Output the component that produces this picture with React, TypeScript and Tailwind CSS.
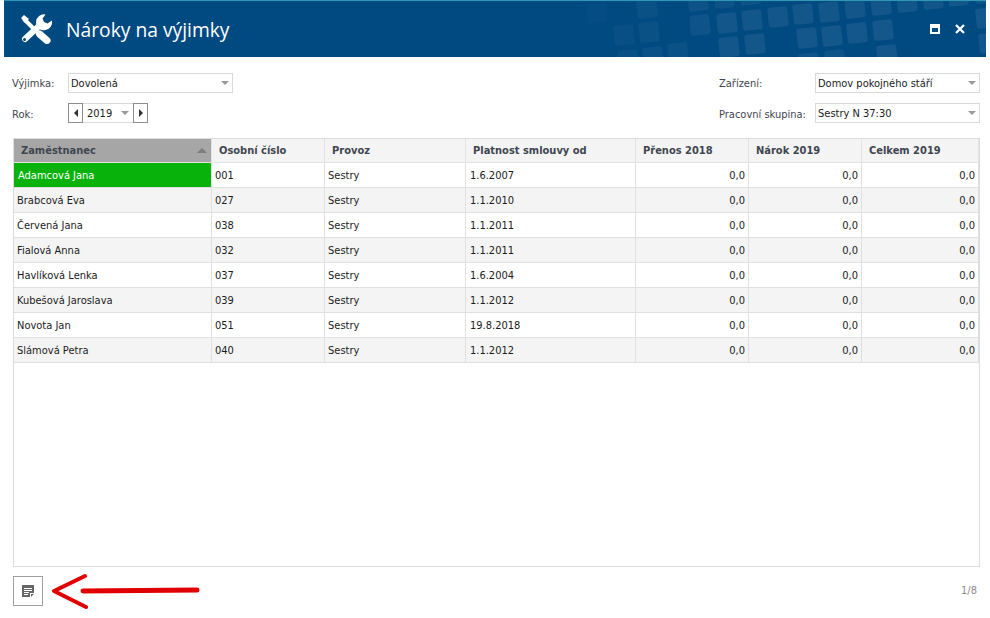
const rows = [
  ['Adamcová Jana', '001', '1.6.2007'],
  ['Brabcová Eva', '027', '1.1.2010'],
  ['Červená Jana', '038', '1.1.2011'],
  ['Fialová Anna', '032', '1.1.2011'],
  ['Havlíková Lenka', '037', '1.6.2004'],
  ['Kubešová Jaroslava', '039', '1.1.2012'],
  ['Novota Jan', '051', '19.8.2018'],
  ['Slámová Petra', '040', '1.1.2012'],
]

// x, y, opacity of the tilted squares in the header background
const squares = [
  [587, 3, 0.015], [614, 25, 0.03], [639, 22, 0.04], [637, -2, 0.04], [618, 50, 0.03], [643, 47, 0.04],
  [668, 43, 0.04], [688, -9, 0.05], [714, -12, 0.05], [740, -15, 0.05], [690, 15, 0.06], [717, 13, 0.07],
  [742, 10, 0.07], [768, 7, 0.07], [719, 37, 0.07], [745, 34, 0.07], [793, 4, 0.07], [819, 2, 0.07],
  [845, -2, 0.07], [871, -5, 0.07], [897, -8, 0.07], [923, -11, 0.07], [948, -14, 0.07], [975, -17, 0.07],
  [797, 28, 0.08], [822, 26, 0.08], [847, 23, 0.08], [873, 20, 0.08], [976, 8, 0.08], [877, 45, 0.08],
  [825, 50, 0.06], [799, 53, 0.06], [979, 33, 0.07],
]

const Caret = () => (
  <span className="h-0 w-0 border-x-[4px] border-t-[4px] border-x-transparent border-t-[#9a9a9a]" />
)

const Select = (props: { value: string }) => (
  <div className="flex h-[20px] w-[165px] items-center justify-between border border-[#d9d9d9] pl-[2px] pr-[3px]">
    <span className="pt-[1px]">{props.value}</span>
    <Caret />
  </div>
)

const Th = (props: { label: string; width: string }) => (
  <div className={'flex items-center border-r border-[#e3e3e3] pl-[7px] font-bold text-[#3f4650] ' + props.width}>
    {props.label}
  </div>
)

const Num = (props: { width: string }) => (
  <div className={'flex h-full items-center justify-end border-r border-[#e0e0e0] pr-[3px] pt-[2px] ' + props.width}>0,0</div>
)

export default function App() {
  return (
    <div
      className="h-[618px] w-[990px] overflow-hidden bg-white text-[11px] leading-[14px] text-[#1c1c1c]"
      style={{ fontFamily: '"DejaVu Sans Condensed", "DejaVu Sans", sans-serif' }}
    >
      <div className="relative mx-[4px] h-[57px] w-[982px] overflow-hidden border-t border-[#2d9ab5] bg-[#004a82]">
        <svg className="absolute left-0 top-0" width="982" height="56" viewBox="4 1 982 56">
          {squares.map(([x, y, o], i) => (
            <rect
              key={i}
              x={x}
              y={y}
              width="20"
              height="20"
              rx="2.5"
              fill="#fff"
              opacity={o}
              transform={`rotate(-6 ${x + 10} ${y + 10})`}
            />
          ))}
        </svg>
        <div className="relative flex h-full items-center">
          <svg className="ml-[16px]" width="32" height="30" viewBox="0 0 32 30" fill="#fff">
            <path d="M1 4 4 1l5 4-4 4z" />
            <path d="M4 5 18 19" stroke="#fff" strokeWidth="4" />
            <path d="M19.500 20 27 26.500" stroke="#fff" strokeWidth="7" strokeLinecap="round" />
            <path d="M25.500.5 22.500 4.500 24 8l3.500 1.500 4.300-3A8 8 0 1 1 25.500.5z" />
            <path d="M5 25 20 11" stroke="#fff" strokeWidth="6" strokeLinecap="round" />
            <circle cx="4.500" cy="25.500" r="1.500" fill="#004a82" />
          </svg>
          <span
            className="ml-[14px] mt-[2px] text-[19.250px] leading-[28px] text-white"
            style={{ fontFamily: '"Open Sans", sans-serif' }}
          >
            Nároky na výjimky
          </span>
          <div className="ml-auto mr-[21px] flex items-center gap-[15px]">
            <span className="h-[10px] w-[10px] border-2 border-t-[4px] border-white" />
            <svg width="10" height="10" viewBox="0 0 10 10" stroke="#fff" strokeWidth="2.200">
              <path d="M1 1l8 8M9 1l-8 8" />
            </svg>
          </div>
        </div>
      </div>

      <div className="mx-[12px] mt-[16px] flex justify-between">
        <div className="flex flex-col gap-[10px] text-[#3f4650]">
          <div className="flex items-center">
            <span className="w-[56px] pt-[2px]">Výjimka:</span>
            <div className="text-[#1c1c1c]"><Select value="Dovolená" /></div>
          </div>
          <div className="flex items-center">
            <span className="w-[56px] pt-[4px]">Rok:</span>
            <div className="flex h-[20px] items-center text-[#1c1c1c]">
              <span className="flex h-[20px] w-[15px] items-center justify-center border border-[#8c8c8c]">
                <span className="h-0 w-0 border-y-[4px] border-r-[4px] border-y-transparent border-r-[#333]" />
              </span>
              <div className="flex h-[20px] w-[50px] items-center justify-between border-y border-[#d9d9d9] pl-[4px] pr-[4px]">
                <span className="pt-[1px]">2019</span>
                <Caret />
              </div>
              <span className="flex h-[20px] w-[15px] items-center justify-center border border-[#8c8c8c]">
                <span className="h-0 w-0 border-y-[4px] border-l-[4px] border-y-transparent border-l-[#333]" />
              </span>
            </div>
          </div>
        </div>
        <div className="mr-[-2px] flex flex-col gap-[10px] text-[#3f4650]">
          <div className="flex items-center">
            <span className="w-[96px] pt-[2px]">Zařízení:</span>
            <div className="text-[#1c1c1c]"><Select value="Domov pokojného stáří" /></div>
          </div>
          <div className="flex items-center">
            <span className="w-[96px] pt-[4px]">Pracovní skupina:</span>
            <div className="text-[#1c1c1c]"><Select value="Sestry N 37:30" /></div>
          </div>
        </div>
      </div>

      <div className="mx-[13px] mt-[15px] h-[429px] w-[967px] border border-[#dcdcdc]">
        <div className="flex h-[24px] border-b border-[#e3e3e3] bg-[#f4f4f4]">
          <div className="flex w-[198px] items-center justify-between border-r border-[#e3e3e3] bg-[#a6a6a6] pl-[7px] pr-[4px] font-bold text-[#3f4650]">
            Zaměstnanec
            <span className="h-0 w-0 border-x-[5px] border-b-[5px] border-x-transparent border-b-[#7d7d7d]" />
          </div>
          <Th label="Osobní číslo" width="w-[113px]" />
          <Th label="Provoz" width="w-[141px]" />
          <Th label="Platnost smlouvy od" width="w-[170px]" />
          <Th label="Přenos 2018" width="w-[113px]" />
          <Th label="Nárok 2019" width="w-[113px]" />
          <Th label="Celkem 2019" width="w-[117px]" />
        </div>
        {rows.map((r, i) => (
          <div key={r[0]} className={'flex h-[25px] items-center border-b border-[#e0e0e0] ' + (i % 2 ? 'bg-[#f4f4f4]' : 'bg-white')}>
            <div className={'flex h-full w-[198px] items-center border-r border-[#e0e0e0] pt-[2px] ' + (i === 0 ? 'bg-[#08b20a] pl-[4px] text-white' : 'pl-[3px]')}>{r[0]}</div>
            <div className="flex h-full w-[113px] items-center border-r border-[#e0e0e0] pl-[3px] pt-[2px]">{r[1]}</div>
            <div className="flex h-full w-[141px] items-center border-r border-[#e0e0e0] pl-[3px] pt-[2px]">Sestry</div>
            <div className="flex h-full w-[170px] items-center border-r border-[#e0e0e0] pl-[4px] pt-[2px]">{r[2]}</div>
            <Num width="w-[113px]" />
            <Num width="w-[113px]" />
            <Num width="w-[117px]" />
          </div>
        ))}
      </div>

      <div className="mx-[13px] mt-[6px] flex items-center justify-between">
        <div className="flex items-center">
          <div className="flex h-[30px] w-[30px] items-center justify-center border border-[#a0a0a0]">
            <svg width="12" height="12" viewBox="0 0 12 12">
              <path d="M0 0h12v8H8v4H0z" fill="#666" />
              <path d="M2 3.500h8M2 5.500h8M2 7.500h5M2 9.500h4" stroke="#fff" strokeWidth="1" />
              <path d="M9 9h3l-3 3z" fill="#666" />
            </svg>
          </div>
          <svg className="ml-[8px]" width="150" height="36" viewBox="0 0 150 36" fill="none" stroke="#e00000" strokeLinecap="round" strokeLinejoin="round">
            <path d="M34 3 3 18l32 16" strokeWidth="4" />
            <path d="M32 18 L146 17" strokeWidth="5" />
          </svg>
        </div>
        <span className="text-[#8a8a8a]">1/8</span>
      </div>
    </div>
  )
}
